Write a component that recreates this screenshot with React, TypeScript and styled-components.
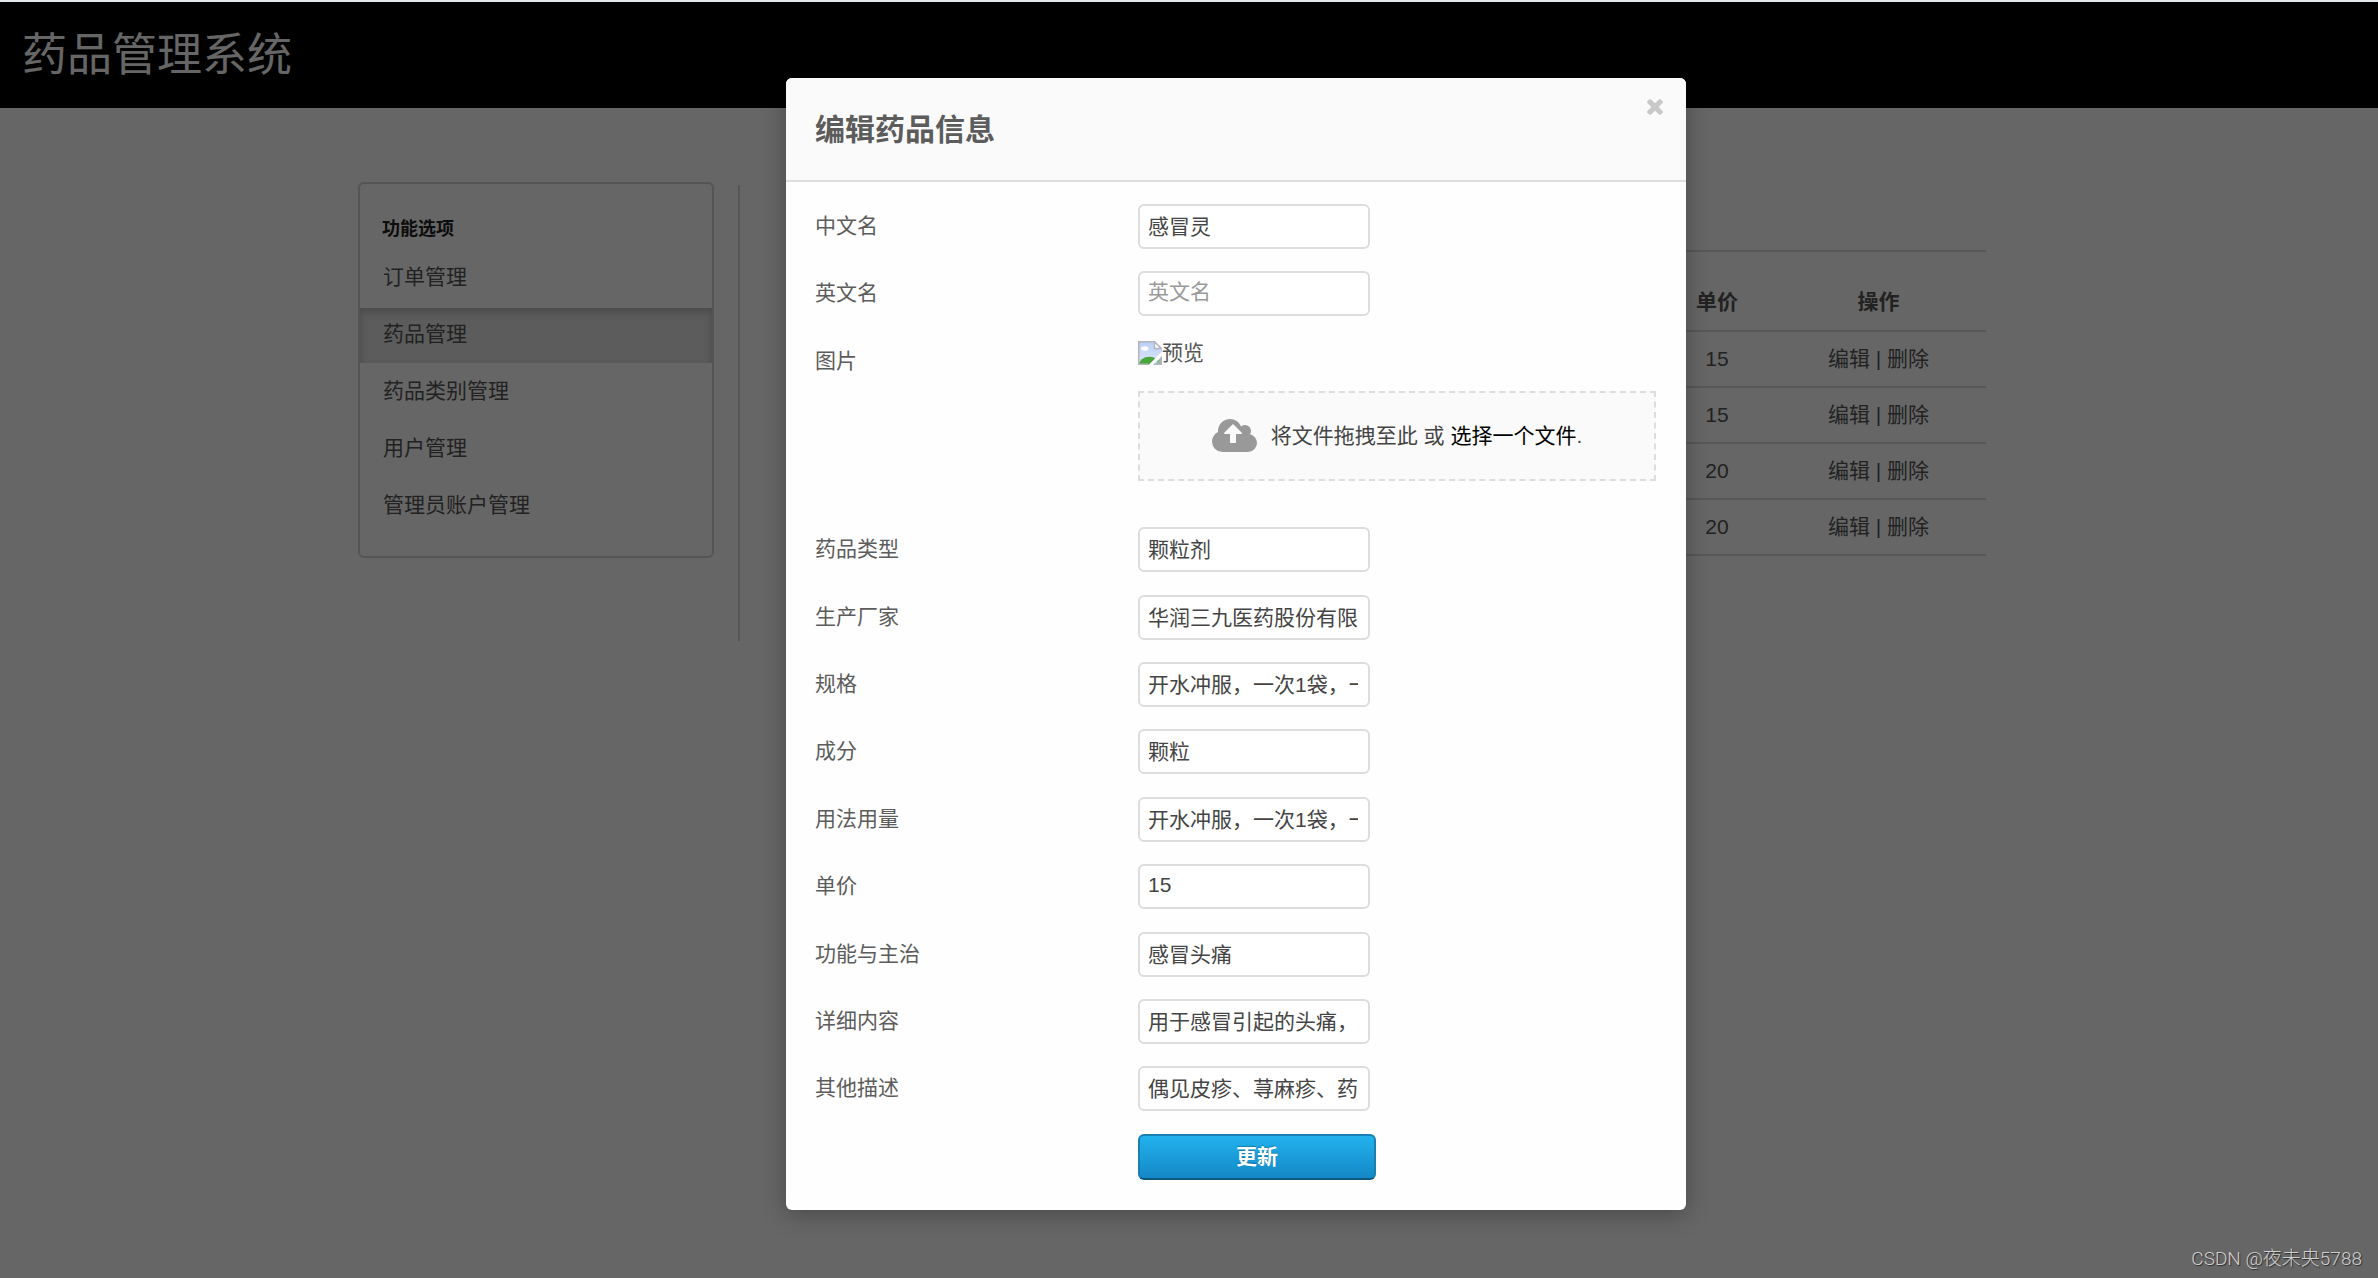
import React from "react";
import styled, { createGlobalStyle } from "styled-components";

const GlobalStyle = createGlobalStyle`
  *, *::before, *::after { box-sizing: border-box; }
  html, body { margin: 0; padding: 0; background: #fff; }
  body, input, button {
    font-family: "Liberation Sans", "Noto Sans CJK SC", sans-serif;
    font-size: 21px;
    line-height: 30px;
    color: #555;
  }
  a { color: inherit; text-decoration: none; }
  h1, h2, h3, p, ul { margin: 0; padding: 0; }
`;

const Shell = styled.div`
  display: flex;
  flex-direction: column;
  min-height: 100vh;
  border-top: 2px solid #e4e7ea;
`;

const Stage = styled.div`
  position: relative;
  flex: 1;
  display: flex;
  flex-direction: column;
`;

const TopBar = styled.header`
  display: flex;
  align-items: center;
  height: 106px;
  padding: 2px 22px 0;
  background: #000;
`;

const SiteTitle = styled.h1`
  font-size: 45px;
  line-height: 60px;
  font-weight: 400;
  color: #fff;
`;

const Container = styled.div`
  display: flex;
  align-items: flex-start;
  width: 100%;
  max-width: 1756px;
  margin: 74px auto 0;
  padding: 0 81px 0 47px;
`;

const Sidebar = styled.nav`
  flex: 0 0 356px;
  padding: 30px 0 20px;
  border: 2px solid #d4d4d4;
  border-radius: 6px;
`;

const SidebarTitle = styled.h3`
  padding: 0 22px;
  font-size: 18px;
  line-height: 30px;
  font-weight: 700;
  color: #222;
`;

const Menu = styled.ul`
  list-style: none;
  padding-top: 7px;
`;

const MenuLink = styled.a<{ $active?: boolean }>`
  display: block;
  height: 55px;
  margin-bottom: 2px;
  padding: 11px 23px;
  background: ${(p) => (p.$active ? "#e5e5e5" : "transparent")};
  box-shadow: ${(p) => (p.$active ? "inset 0 4px 8px rgba(0, 0, 0, 0.2)" : "none")};
`;

const Divider = styled.div`
  flex: 0 0 2px;
  height: 456px;
  margin: 3px 0 0 24px;
  background: #d8d8d8;
`;

const Content = styled.main`
  flex: 1;
  margin-left: 50px;
  padding-top: 68px;
`;

const DrugTable = styled.table`
  width: 100%;
  table-layout: fixed;
  border-collapse: collapse;
  border-top: 2px solid #ddd;
`;

const Cell = styled.td`
  height: 56px;
  padding: 0;
  text-align: center;
  border-bottom: 2px solid #ddd;
`;

const HeadCell = styled.th<{ $width?: number }>`
  width: ${(p) => (p.$width ? p.$width + "px" : "auto")};
  height: 80px;
  padding: 22px 0 0;
  text-align: center;
  font-weight: 700;
  border-bottom: 2px solid #ddd;
`;

const Overlay = styled.div`
  position: absolute;
  inset: 0;
  display: flex;
  justify-content: center;
  align-items: flex-start;
  padding: 76px 0 68px 94px;
  background: rgba(0, 0, 0, 0.6);
`;

const Dialog = styled.section`
  display: flex;
  flex-direction: column;
  width: 100%;
  max-width: 900px;
  min-height: 100%;
  background: #fefefe;
  border-radius: 6px;
  box-shadow: 0 4px 24px rgba(0, 0, 0, 0.3);
`;

const DialogHeader = styled.header`
  display: flex;
  justify-content: space-between;
  align-items: flex-start;
  height: 104px;
  padding: 19px 21px 0 29px;
  background: #fafafa;
  border-bottom: 2px solid #ddd;
  border-radius: 6px 6px 0 0;
`;

const DialogTitle = styled.h2`
  padding-top: 9px;
  font-size: 30px;
  line-height: 48px;
  font-weight: 700;
  color: #5c5c5c;
`;

const CloseButton = styled.button`
  display: flex;
  padding: 2px;
  border: 0;
  background: none;
  color: #c8c8c8;
  cursor: pointer;
`;

const Form = styled.form`
  flex: 1;
  display: flex;
  flex-direction: column;
  justify-content: space-between;
  padding: 22px 30px 30px 29px;
`;

const Row = styled.div`
  display: grid;
  grid-template-columns: 323px 1fr;
  align-items: start;
`;

const Label = styled.label`
  line-height: 44px;
  color: #5c5c5c;
`;

const TextInput = styled.input`
  width: 232px;
  height: 45px;
  padding: 0 10px 3px 8px;
  border: 2px solid #ddd;
  border-radius: 6px;
  background: #fff;
  color: #444;
  outline: none;
  &::placeholder { color: #999; opacity: 1; }
`;

const ImageField = styled.div`
  display: flex;
  flex-direction: column;
  gap: 24px;
  padding-bottom: 24px;
`;

const Preview = styled.div`
  display: flex;
  align-items: center;
  height: 28px;
`;

const DropZone = styled.div`
  display: flex;
  align-items: center;
  justify-content: center;
  gap: 14px;
  height: 90px;
  border: 2px dashed #ddd;
  background: #fafafa;
  color: #444;
`;

const FileLink = styled.a`
  color: #000;
`;

const SubmitButton = styled.button`
  grid-column: 2;
  width: 238px;
  height: 46px;
  padding: 0;
  border: 2px solid #1a80b3;
  border-bottom-color: #0d5a80;
  border-radius: 6px;
  background: linear-gradient(#22b2ee, #1488c6);
  color: #fff;
  font-weight: 700;
  text-shadow: 0 -1px 1px rgba(0, 0, 0, 0.25);
  cursor: pointer;
`;

const Watermark = styled.span`
  position: absolute;
  right: 16px;
  bottom: 4px;
  font-family: Roboto, "Noto Sans CJK SC", sans-serif;
  font-size: 19px;
  font-weight: 300;
  color: #d0d0d0;
  text-shadow: 1px 1px 1px rgba(0, 0, 0, 0.6);
`;

const BrokenImageIcon = () => (
  <svg width="24" height="24" viewBox="0 0 16 16" aria-hidden="true">
    <defs>
      <linearGradient id="sky" x1="0" y1="0" x2="0" y2="1">
        <stop offset="0" stopColor="#b9cdf5" />
        <stop offset="1" stopColor="#dfe8fb" />
      </linearGradient>
      <clipPath id="sheet">
        <path d="M0 0H11L16 5V7L7 16H0Z" />
      </clipPath>
    </defs>
    <g clipPath="url(#sheet)">
      <rect width="16" height="16" fill="url(#sky)" />
      <ellipse cx="4.5" cy="5" rx="2.5" ry="1.5" fill="#fff" />
      <ellipse cx="7.5" cy="16" rx="7" ry="5.5" fill="#4aa53a" />
    </g>
    <path d="M11 0.5V5H15.5Z" fill="#fff" stroke="#b4b4c0" />
    <path d="M11 0.5H0.5V15.5H7" fill="none" stroke="#b4b4c0" />
    <path d="M16 10V16H10Z" fill="#cbd8f5" />
    <path d="M11.5 16L13 13L16 11V16Z" fill="#4aa53a" fillOpacity="0.5" />
    <path d="M15.5 10.5V15.5H10.5" fill="none" stroke="#b4b4c0" />
  </svg>
);

const CloudUploadIcon = () => (
  <svg width="45" height="33" viewBox="-64 128 1920 1408" fill="#999" aria-hidden="true">
    <path d="M1216 736q0-14-9-23l-352-352q-9-9-23-9t-23 9l-351 351q-10 12-10 24 0 14 9 23t23 9h224v352q0 13 9.5 22.5t22.5 9.5h192q13 0 22.5-9.5t9.5-22.5v-352h224q13 0 22.5-9.5t9.5-22.5zm640 416q0 159-112.5 271.5t-271.5 112.5h-1088q-185 0-316.5-131.5t-131.5-316.5q0-130 70-240t188-165q-2-30-2-43 0-212 150-362t362-150q156 0 285.5 87t188.5 231q71-62 166-62 106 0 181 75t75 181q0 76-41 138 130 31 213.5 135.5t83.5 238.5z" />
  </svg>
);

const CloseIcon = () => (
  <svg width="16" height="16" viewBox="302 366 1188 1188" fill="currentColor" aria-hidden="true">
    <path d="M1490 1322q0 40-28 68l-136 136q-28 28-68 28t-68-28l-294-294-294 294q-28 28-68 28t-68-28l-136-136q-28-28-28-68t28-68l294-294-294-294q-28-28-28-68t28-68l136-136q28-28 68-28t68 28l294 294 294-294q28-28 68-28t68 28l136 136q28 28 28 68t-28 68l-294 294 294 294q28 28 28 68z" />
  </svg>
);

const menu = ["订单管理", "药品管理", "药品类别管理", "用户管理", "管理员账户管理"];
const prices = [15, 15, 20, 20];

type Field = { id: string; label: string; value: string; placeholder?: string };

const nameFields: Field[] = [
  { id: "nameCn", label: "中文名", value: "感冒灵" },
  { id: "nameEn", label: "英文名", value: "", placeholder: "英文名" },
];

const detailFields: Field[] = [
  { id: "type", label: "药品类型", value: "颗粒剂" },
  { id: "maker", label: "生产厂家", value: "华润三九医药股份有限公司" },
  { id: "spec", label: "规格", value: "开水冲服，一次1袋，一日3次" },
  { id: "component", label: "成分", value: "颗粒" },
  { id: "usage", label: "用法用量", value: "开水冲服，一次1袋，一日3次" },
  { id: "price", label: "单价", value: "15" },
  { id: "effect", label: "功能与主治", value: "感冒头痛" },
  { id: "detail", label: "详细内容", value: "用于感冒引起的头痛，发热" },
  { id: "other", label: "其他描述", value: "偶见皮疹、荨麻疹、药热" },
];

const FieldRow = ({ field }: { field: Field }) => (
  <Row>
    <Label htmlFor={field.id}>{field.label}</Label>
    <TextInput id={field.id} type="text" defaultValue={field.value} placeholder={field.placeholder} />
  </Row>
);

export default function App() {
  return (
    <Shell>
      <GlobalStyle />
      <Stage>
        <TopBar>
          <SiteTitle>药品管理系统</SiteTitle>
        </TopBar>
        <Container>
          <Sidebar>
            <SidebarTitle>功能选项</SidebarTitle>
            <Menu>
              {menu.map((item) => (
                <li key={item}>
                  <MenuLink href="#" $active={item === "药品管理"}>{item}</MenuLink>
                </li>
              ))}
            </Menu>
          </Sidebar>
          <Divider />
          <Content>
            <DrugTable>
              <thead>
                <tr>
                  <HeadCell />
                  <HeadCell $width={108}>单价</HeadCell>
                  <HeadCell $width={215}>操作</HeadCell>
                </tr>
              </thead>
              <tbody>
                {prices.map((price, i) => (
                  <tr key={i}>
                    <Cell />
                    <Cell>{price}</Cell>
                    <Cell>
                      <a href="#">编辑</a> | <a href="#">删除</a>
                    </Cell>
                  </tr>
                ))}
              </tbody>
            </DrugTable>
          </Content>
        </Container>
        <Overlay>
          <Dialog role="dialog" aria-labelledby="dialog-title">
            <DialogHeader>
              <DialogTitle id="dialog-title">编辑药品信息</DialogTitle>
              <CloseButton type="button" aria-label="关闭">
                <CloseIcon />
              </CloseButton>
            </DialogHeader>
            <Form onSubmit={(e) => e.preventDefault()}>
              {nameFields.map((f) => <FieldRow key={f.id} field={f} />)}
              <Row>
                <Label as="span">图片</Label>
                <ImageField>
                  <Preview>
                    <BrokenImageIcon />
                    <span>预览</span>
                  </Preview>
                  <DropZone>
                    <CloudUploadIcon />
                    <span>将文件拖拽至此 或 <FileLink href="#">选择一个文件</FileLink>.</span>
                  </DropZone>
                </ImageField>
              </Row>
              {detailFields.map((f) => <FieldRow key={f.id} field={f} />)}
              <Row>
                <SubmitButton type="submit">更新</SubmitButton>
              </Row>
            </Form>
          </Dialog>
        </Overlay>
        <Watermark>CSDN @夜未央5788</Watermark>
      </Stage>
    </Shell>
  );
}
